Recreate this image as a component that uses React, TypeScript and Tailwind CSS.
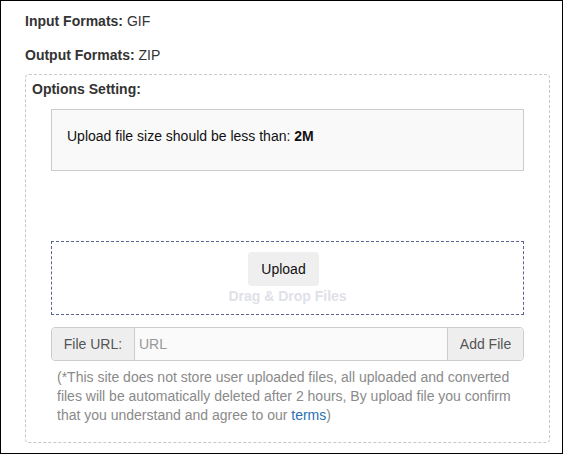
export default function App() {
  const font = { fontFamily: '"Liberation Sans", Arial, sans-serif' };
  return (
    <div className="w-[563px] h-[454px] border border-black bg-white overflow-hidden text-[14px] text-[#333]" style={font}>
      <div className="pl-[24px] pr-[12px] pt-[10px]">
        <p className="leading-[20px]"><b>Input Formats:</b> GIF</p>
        <p className="leading-[20px] mt-[14px]"><b>Output Formats:</b> ZIP</p>
        <div className="mt-[9px] border border-dashed border-[#c8c8c8] rounded-[4px] h-[369px]">
          <div className="pl-[6px] pt-[4px] leading-[20px] font-bold">Options Setting:</div>
          <div className="mx-[25px] mt-[10px] h-[62px] bg-[#f9f9f9] border border-[#cccccc] pl-[15px] pt-[16px] leading-[20px] text-[#111]">
            <span>Upload file size should be less than: <b>2M</b></span>
          </div>
          <div className="mx-[25px] mt-[70px] h-[74px] border border-dashed border-[#5c6294] flex flex-col items-center pt-[10px]">
            <div className="flex">
              <button className="w-[71px] h-[34px] bg-[#efefef] rounded-[4px] text-[#111] text-[14px] mr-[8px]">Upload</button>
            </div>
            <div className="font-bold text-[#dfe1e8] leading-[18px] mt-[1px]">Drag &amp; Drop Files</div>
          </div>
          <div className="mx-[25px] mt-[12px] h-[34px] flex border border-[#cccccc] rounded-[4px] overflow-hidden">
            <div className="w-[83px] bg-[#eeeeee] border-r border-[#cccccc] flex items-center justify-center text-[#555]">File URL:</div>
            <div className="flex-1 bg-[#fafafa] flex items-center pl-[4px] text-[#999]">URL</div>
            <div className="w-[76px] bg-[#eeeeee] border-l border-[#cccccc] flex items-center justify-center text-[#555]">Add File</div>
          </div>
          <p className="mx-[31px] mt-[7px] leading-[19px] text-[#8a8a8a]">
            (*This site does not store user uploaded files, all uploaded and converted files will be automatically deleted after 2 hours, By upload file you confirm that you understand and agree to our <span className="text-[#2a6fb0]">terms</span>)
          </p>
        </div>
      </div>
    </div>
  );
}
